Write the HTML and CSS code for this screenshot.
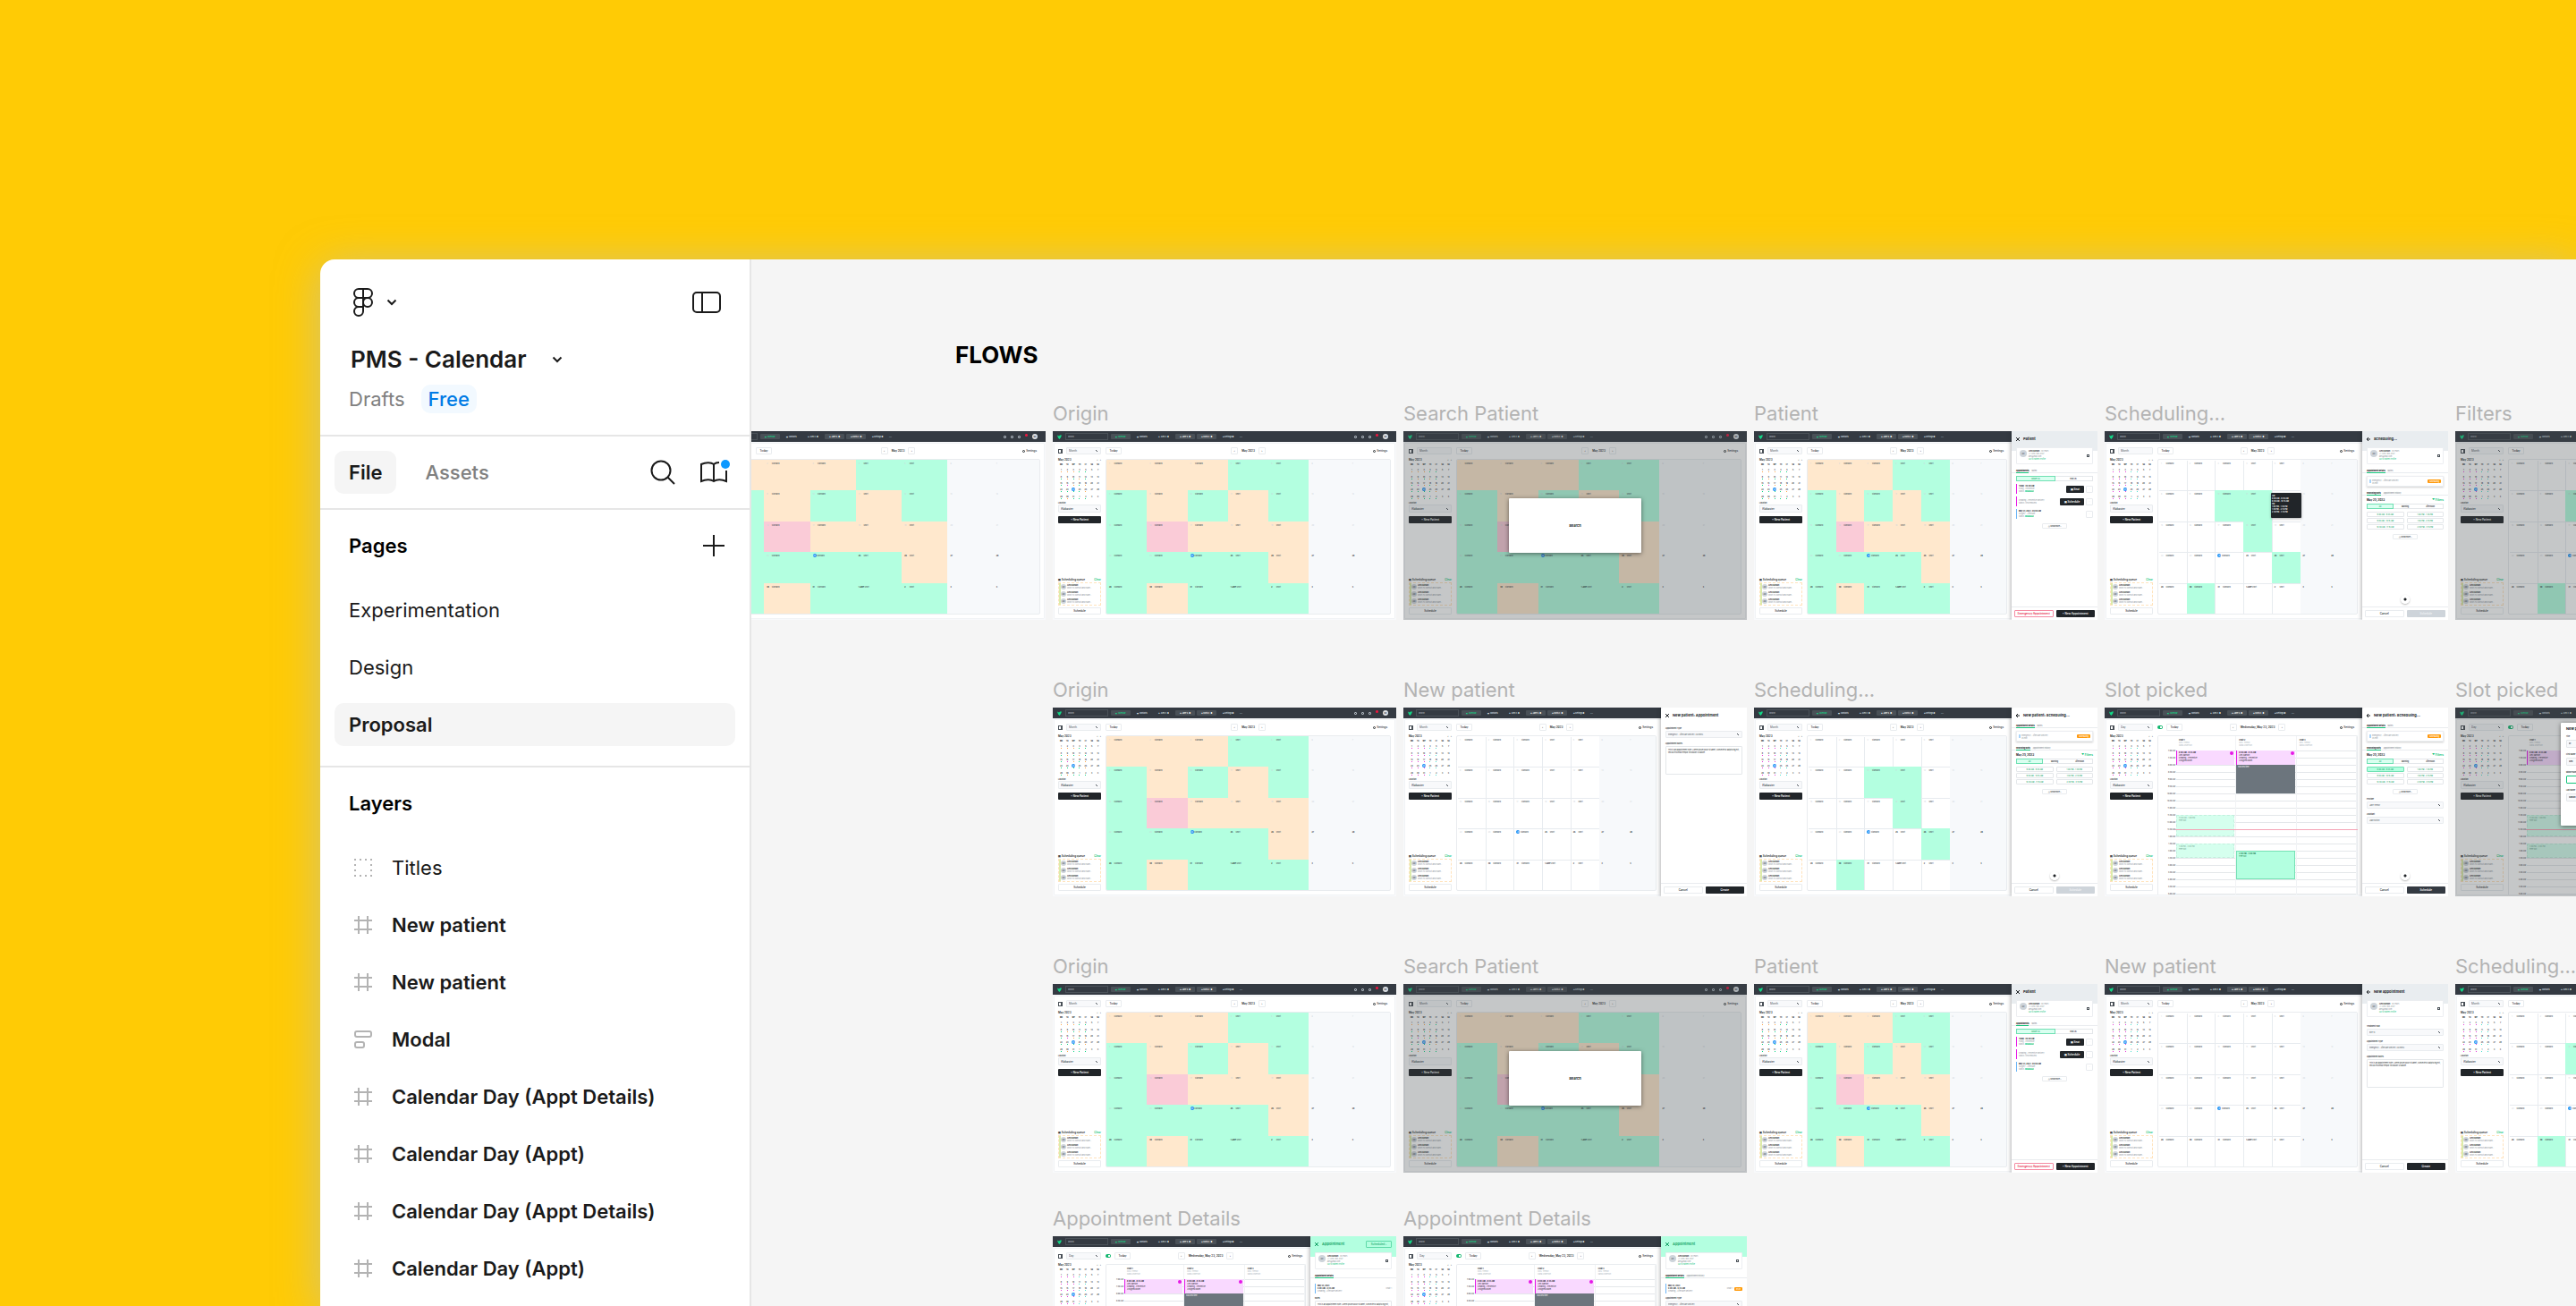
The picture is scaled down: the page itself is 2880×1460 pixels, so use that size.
FILE: index.html
```
<!DOCTYPE html>
<html lang="en">
<head>
<meta charset="utf-8">
<title>PMS - Calendar</title>
<link rel="stylesheet" href="styles.css">
</head>
<body>
<div class="window">
  <aside class="sidebar">
    <header class="file-head">
      <div class="file-head-row">
        <button class="icon-btn menu-btn" aria-label="Main menu">
          <svg width="22" height="32" viewBox="0 0 22 32" class="line"><path d="M6 1h10a5 5 0 0 1 0 10H6A5 5 0 0 1 6 1zM11 1v25M11 11H6a5 5 0 0 0 0 10h5M16 11a5 5 0 1 1 0 10 5 5 0 0 1 0-10zM11 21H6a5 5 0 1 0 5 5z"/></svg>
          <svg width="12" height="8" viewBox="0 0 12 8" class="line"><path d="M1.500 1.500L6 6l4.500-4.500"/></svg>
        </button>
        <button class="icon-btn" aria-label="Toggle panel">
          <svg width="32" height="24" viewBox="0 0 32 24" class="line"><rect x="1" y="1" width="30" height="22" rx="4"/><path d="M11 1v22"/></svg>
        </button>
      </div>
      <button class="file-name">PMS - Calendar
        <svg width="12" height="8" viewBox="0 0 12 8" class="line"><path d="M1.500 1.500L6 6l4.500-4.500"/></svg>
      </button>
      <div class="file-place"><a href="#drafts">Drafts</a><span class="plan">Free</span></div>
    </header>
    <div class="tabs">
      <button class="tab active">File</button>
      <button class="tab">Assets</button>
      <div class="tab-tools">
        <button class="icon-btn" aria-label="Search">
          <svg width="28" height="28" viewBox="0 0 28 28" class="line"><circle cx="12" cy="12" r="10.500"/><path d="M19.500 19.500L27 27"/></svg>
        </button>
        <button class="icon-btn" aria-label="Libraries">
          <svg width="34" height="28" viewBox="0 0 34 28"><path class="line" d="M16 5C13 2.600 7 2.600 2 5v19c5-2.400 11-2.400 14 0 3-2.400 9-2.400 14 0V12M16 5v19M16 5c1.500-1.300 3.500-1.900 6-1.900"/><circle cx="29" cy="5" r="5" fill="#0d99ff"/></svg>
        </button>
      </div>
    </div>
    <section class="group">
      <div class="group-head"><h2>Pages</h2>
        <button class="icon-btn" aria-label="Add page"><svg width="24" height="24" viewBox="0 0 24 24" class="line"><path d="M12 0v24M0 12h24"/></svg></button>
      </div>
      <button class="item">Experimentation</button>
      <button class="item">Design</button>
      <button class="item active">Proposal</button>
    </section>
    <section class="group">
      <div class="group-head"><h2>Layers</h2></div>
      <div id="layers"></div>
    </section>
  </aside>
  <main class="canvas">
    <h1 class="board-title">FLOWS</h1>
    <div id="flows" class="flows"></div>
  </main>
</div>
<script src="app.js"></script>
</body>
</html>
```
FILE: styles.css
```
* { box-sizing: border-box; }
html, body { margin: 0; height: 100%; }
body {
  background: #ffcb05;
  font-family: Inter, "Liberation Sans", sans-serif;
  font-optical-sizing: none;
  overflow: hidden;
  display: flex;
}
button, input, select, textarea { font: inherit; color: inherit; margin: 0; padding: 0; border: 0; background: none; border-radius: 0; }
select { appearance: none; }
textarea { resize: none; display: block; width: 100%; }
h1, h2, h3, p { margin: 0; font: inherit; }
.line { fill: none; stroke: #1a1a1a; stroke-width: 2; }

.window {
  flex: 1;
  min-width: 0;
  margin: 290px 0 0 358px;
  display: flex;
  border-top-left-radius: 16px;
  box-shadow: 0 6px 48px rgba(171, 191, 217, .55);
}
.sidebar {
  flex: none;
  width: 482px;
  background: #fff;
  border-right: 2px solid #e6e6e6;
  border-top-left-radius: 16px;
  font-size: 22px;
  line-height: 32px;
  color: #1a1a1a;
  overflow: hidden;
}
.icon-btn { display: flex; align-items: center; gap: 14px; }
.file-head { height: 198px; padding: 32px 32px 0 32px; border-bottom: 2px solid #e6e6e6; }
.file-head-row { display: flex; justify-content: space-between; padding-left: 5px; }
.menu-btn { gap: 15px; }
.file-name { display: flex; align-items: center; gap: 28px; margin: 32px 0 12px 2px; font-size: 26px; font-weight: 600; }
.file-place { display: flex; gap: 18px; }
.file-place a { color: #808080; text-decoration: none; }
.plan { background: #f2f9ff; color: #007be5; border-radius: 10px; padding: 0 8px; font-weight: 500; }
.tabs { display: flex; align-items: center; gap: 16px; height: 82px; padding: 0 22px 0 16px; border-bottom: 2px solid #e6e6e6; }
.tab { height: 48px; padding: 0 16px; border-radius: 10px; color: #808080; font-weight: 500; }
.tab.active { background: #f5f5f5; color: #1a1a1a; font-weight: 600; }
.tab-tools { margin-left: auto; display: flex; gap: 27px; }
.group { padding: 8px 16px 22px; border-bottom: 2px solid #e6e6e6; }
.group-head { display: flex; align-items: center; justify-content: space-between; height: 64px; padding: 0 12px 0 16px; margin-bottom: 16px; }
.group-head h2 { font-weight: 600; color: #000; }
.item { display: flex; align-items: center; gap: 22px; width: 100%; height: 48px; margin-bottom: 16px; padding: 0 16px; border-radius: 10px; text-align: left; }
.item:last-child { margin-bottom: 0; }
.item.active { background: #f5f5f5; font-weight: 600; }
.item.bold { font-weight: 600; }
.item svg { margin-left: 6px; fill: none; stroke: #b3b3b3; stroke-width: 2; }

.canvas { flex: 1; min-width: 0; background: #f5f5f5; overflow: hidden; }
.board-title { margin: 91px 0 0 228px; font-size: 26px; line-height: 32px; font-weight: 700; color: #000; }
.flows { margin-left: -55px; }
.flow { display: grid; grid-template-columns: repeat(6, 384px); gap: 8px; margin-top: 62px; }
.flow:first-child { margin-top: 33px; }
.flow.tight { margin-top: 35px; }
.label { height: 36px; line-height: 33px; font-size: 22px; color: #b3b3b3; white-space: nowrap; }
.from-2 > :first-child { grid-column: 2; }

/* Calendar screens */
.screen { position: relative; display: flex; height: 211px; background: #f8f9fb; font-size: 3px; line-height: 4px; color: #212529; overflow: hidden; }
.app { flex: 1; min-width: 0; display: flex; flex-direction: column; overflow: hidden; }
.topbar { flex: none; height: 12px; background: #343a42; color: #dee2e6; display: flex; align-items: center; padding: 0 4px 0 5px; font-weight: 600; white-space: nowrap; }
.logo { width: 5px; height: 5px; flex: none; margin-right: 4px; }
.search { flex: none; width: 48px; height: 8px; border: 1px solid #4b5259; padding: 0 2px; margin-right: 3px; font-size: 2px; }
.search::placeholder { color: #adb5bd; opacity: 1; }
.chip { flex: none; width: 22px; height: 6px; margin-right: 2px; border-radius: 1px; font-size: 2px; text-align: center; line-height: 6px; }
.chip.on { background: #495057; color: #fff; }
.chip.green { color: #12d887; }
.status { margin-left: auto; display: flex; align-items: center; gap: 5px; }
.status i { width: 3px; height: 3px; border: 1px solid #adb5bd; border-radius: 1px; }
.status .alert { background: #e5173f; border-color: #e5173f; margin-bottom: 4px; }
.status b { width: 6px; height: 6px; margin-right: 5px; border-radius: 50%; background: #dee2e6; color: #343a42; font-size: 2px; line-height: 6px; text-align: center; }
.card { flex: 1; min-height: 0; display: flex; gap: 5px; margin: 2px; padding: 4px; background: #fff; box-shadow: 0 0 1px #ced4da; }
.with-panel .card { margin-right: 0; padding-right: 5px; }
.side { flex: none; width: 48px; display: flex; flex-direction: column; }
.side-head { display: flex; justify-content: space-between; align-items: center; height: 8px; }
.toggle { width: 5px; height: 5px; border: 1px solid #495057; border-right-width: 2px; }
.pick { border: 1px solid #e9ecef; border-radius: 1px; background: #f8f9fb; color: #495057; padding: 0 2px; height: 9px; width: 100%; font-size: 3px; background-image: linear-gradient(45deg, transparent 50%, #495057 50%, #495057 60%, transparent 60%); background-size: 2px 2px; background-repeat: no-repeat; background-position: right 3px center; }
.side-head .pick { width: 39px; height: 8px; }
.month { display: flex; justify-content: space-between; margin-top: 4px; font-weight: 600; }
.month span { color: #495057; }
.mini { border-collapse: collapse; width: 100%; height: 43px; font-size: 2px; table-layout: fixed; font-weight: 600; }
.mini td, .mini th { padding: 0; text-align: center; }
.mini td::after { content: ""; display: block; width: 1px; height: 1px; margin: 0 auto; background: var(--dot, transparent); }
.mini .p { --dot: #e83ed8; }
.mini .c { --dot: #4fe3d0; }
.mini .o { --dot: #ffa94d; }
.mini .g { --dot: #12d887; }
.mini mark { display: block; width: 4px; height: 4px; margin: 0 auto; border-radius: 50%; background: #1c8cf5; color: #fff; }
.field-label { display: block; font-size: 2px; font-weight: 600; margin-top: 1px; }
.dark { background: #212529; color: #fff; border-radius: 1px; font-weight: 600; text-align: center; height: 8px; width: 100%; }
.side .dark { margin-top: 4px; }
.queue-head { display: flex; justify-content: space-between; margin-top: auto; font-size: 3px; font-weight: 600; height: 5px; }
.queue-head a { color: #12c47a; text-decoration: none; }
.queue { border: 1px dashed #ffe3bd; height: 26px; margin-bottom: 2px; }
.queue div { display: flex; align-items: center; gap: 1px; height: 8px; border-left: 2px solid #dcebaa; font-size: 2px; line-height: 3px; white-space: nowrap; color: #868e96; }
.queue b { display: block; color: #212529; }
.who { flex: none; width: 6px; height: 6px; border-radius: 50%; background: #ced4da; color: #495057; font-size: 2px; line-height: 6px; text-align: center; font-weight: 600; }
.light { border: 1px solid #e9ecef; border-radius: 1px; background: #fff; height: 8px; font-weight: 500; text-align: center; }
.main { flex: 1; min-width: 0; display: flex; flex-direction: column; gap: 5px; }
.toolbar { display: grid; grid-template-columns: 1fr auto 1fr; height: 8px; align-items: center; font-weight: 600; white-space: nowrap; }
.toolbar > div { display: flex; align-items: center; gap: 4px; }
.toolbar .end { justify-content: flex-end; padding-right: 4px; gap: 1px; font-weight: 500; }
.bare .main { margin-left: 11px; }
.bare .toolbar { padding-left: 43px; }
.gear { width: 3px; height: 3px; border: 1px solid #212529; border-radius: 50%; }
.today { width: 18px; }
.arrow { width: 8px; }
.switch { appearance: none; width: 6px; height: 4px; border-radius: 2px; background: radial-gradient(circle at 4px 2px, #fff 1px, #12b76f 1px); }
.cal { flex: 1; display: grid; grid-template-columns: repeat(7, 1fr); grid-template-rows: repeat(5, 1fr); border: 1px solid #e9ecef; border-radius: 2px; overflow: hidden; font-size: 2px; font-weight: 500; }
.cal > div { box-shadow: 1px 1px 0 rgba(160, 175, 190, .25); padding: 2px 3px; white-space: nowrap; color: #495057; }
.cal .weekend { background: #f7f9fb; }
.cal .orange { background: #ffe8cd; }
.cal .mint { background: #b3ffe0; }
.cal .pink { background: #facbd7; }
.cal i { font-style: normal; display: inline-block; width: 5px; color: #ced4da; }
.cal .next i { color: #212529; font-weight: 700; width: auto; min-width: 5px; }
.cal .now i { width: 4px; height: 4px; border-radius: 50%; background: #1c8cf5; color: #fff; text-align: center; }

.day { flex: 1; min-height: 0; display: grid; grid-template-columns: 20px 1fr 1fr 1fr; grid-template-rows: 16px 1fr; border: 1px solid #e9ecef; border-bottom: 0; border-radius: 2px 2px 0 0; overflow: hidden; font-size: 2px; line-height: 3px; margin-bottom: -4px; }
.day h3 { padding: 3px; color: #adb5bd; border-right: 1px solid #f1f3f5; }
.day h3 b { display: block; color: #212529; }
.hours { text-align: right; padding-right: 1px; line-height: 8px; margin-top: -4px; white-space: nowrap; }
.hours div { height: 8px; }
.chair { position: relative; border-right: 1px solid #f1f3f5; background: repeating-linear-gradient(#e4e7ea 0 1px, #fff 1px 8px); }
.event { position: absolute; left: 0; right: 1px; padding: 1px 2px; white-space: nowrap; }
.event.visit { top: 0; height: 16px; background: #f9d9ff; border-left: 1px solid #e619e6; }
.event.visit::after { content: ""; position: absolute; right: 1px; top: 1px; width: 4px; height: 4px; border-radius: 50%; background: #e619e6; }
.event.block { top: 16px; height: 32px; background: #6c757d; color: #fff; }
.event.soft { background: #d5ffee; border: 1px dashed #c2efdd; color: #6c9a86; }
.event.free { top: 112px; height: 32px; background: #b3ffe0; border: 1px solid #74e0b4; color: #17794f; }
.event.first { top: 72px; height: 24px; }
.event.second { top: 104px; height: 16px; }
.now-line { position: absolute; left: 79px; width: 204px; top: 136px; height: 1px; background: #f5a3b5; }

.panel { flex: none; width: 96px; background: #fff; display: flex; flex-direction: column; box-shadow: -1px 0 4px rgba(33, 37, 41, .35); position: relative; border-top-left-radius: 2px; font-size: 2px; }
.panel > * { margin-left: 5px; margin-right: 5px; }
.panel-head { display: flex; align-items: center; gap: 4px; height: 18px; margin: 0; padding: 0 5px; font-size: 4px; font-weight: 700; white-space: nowrap; }
.panel-head svg { width: 4px; height: 4px; fill: none; stroke: currentColor; }
.panel.gray { background: linear-gradient(#e9edf0 22px, #fff 22px); }
.panel.mint { background: linear-gradient(#b3ffe0 23px, #fff 23px); }
.panel.mint .panel-head { color: #0f9f62; font-weight: 600; }
.panel-head .light { margin-left: auto; width: 29px; font-size: 3px; background: none; border-color: #5fd9a8; }
.person { flex: none; display: flex; gap: 2px; height: 19px; padding: 2px 3px; background: #fff; border: 1px solid #eceef1; border-radius: 1px; line-height: 3px; color: #868e96; margin-bottom: 5px; }
.person .who { width: 8px; height: 8px; line-height: 8px; }
.person b { color: #212529; }
.person a { color: #12c47a; text-decoration: none; }
.person em { margin: 5px 0 0 auto; width: 3px; height: 3px; border: 1px solid #495057; }
.sub { display: flex; gap: 3px; height: 5px; margin-left: 0; margin-right: 0; padding: 0 5px; border-bottom: 1px solid #e9ecef; font-weight: 600; margin-bottom: 3px; flex: none; color: #868e96; }
.sub b { border-bottom: 1px solid #12c47a; height: 5px; color: #212529; }
.seg { display: flex; height: 6px; border: 1px solid #e4e7ea; line-height: 4px; text-align: center; font-weight: 600; flex: none; }
.seg button { flex: 1; line-height: 4px; }
.seg .on { background: #d9fff0; color: #12a466; outline: 1px solid #6fe0b3; }
.appt { display: flex; align-items: center; gap: 2px; height: 11px; margin-top: 3px; border-left: 1px solid #e619e6; padding-left: 2px; color: #868e96; line-height: 3px; white-space: nowrap; flex: none; }
.appt.blue { border-color: #6bb5f7; }
.appt p { flex: 1; }
.appt b { color: #212529; }
.appt mark { background: #20c77f; color: #fff; border-radius: 1px; }
.appt .dark { width: 20px; font-size: 3px; line-height: 8px; }
.appt .wide { width: 27px; }
.appt .light { width: 8px; }
.more { align-self: center; width: 28px; height: 6px; margin-top: 5px; font-size: 2px; line-height: 4px; flex: none; }
.job { display: flex; justify-content: space-between; height: 12px; padding: 3px 2px; border: 1px solid #eceef1; box-shadow: 0 1px 2px rgba(0, 0, 0, .2); line-height: 3px; color: #868e96; margin-bottom: 5px; flex: none; }
.job p { border-left: 2px solid #a9d4fb; padding-left: 1px; }
.tag { background: #ff9a0a; color: #fff; border-radius: 1px; height: 4px; line-height: 4px; padding: 0 2px; font-weight: 600; }
.date { display: flex; justify-content: space-between; font-size: 3px; font-weight: 700; height: 6px; flex: none; }
.date a { color: #12c47a; text-decoration: none; }
.slots { display: grid; grid-template-columns: 1fr 1fr; gap: 1px 3px; margin-top: 3px; flex: none; }
.slots button { height: 6px; border: 1px solid #e4e7ea; border-radius: 1px; color: #12a466; line-height: 4px; font-weight: 500; }
.slots .on { background: #b3ffe0; border-color: #6fe0b3; }
.form { display: flex; flex-direction: column; gap: 1px; flex: none; }
.form label { font-weight: 600; margin-top: 3px; line-height: 4px; }
.form .pick, .form input { font-size: 2px; height: 8px; flex: none; }
.form input { border: 1px solid #e4e7ea; background: #f8f9fb; border-radius: 1px; padding: 0 2px; }
.form .focus { border-color: #12c47a; background: #fff; }
.form textarea { height: 32px; border: 1px solid #e4e7ea; border-radius: 1px; padding: 2px; line-height: 3px; font-size: 2px; overflow: hidden; }
.fab { width: 10px; height: 10px; border-radius: 50%; background: radial-gradient(#212529 1px, #fff 2px); box-shadow: 0 1px 2px rgba(0, 0, 0, .3); margin: auto auto 3px; }
.panel footer { display: grid; grid-template-columns: 1fr 1fr; gap: 3px; align-items: center; height: 15px; margin: auto 0 0; padding: 0 3px; border-top: 1px solid #e9ecef; font-size: 3px; white-space: nowrap; flex: none; }
.panel .fab + footer { margin-top: 0; }
.panel .danger { border: 1px solid #f58ba3; color: #e5173f; font-weight: 600; }
.off { background: #ced4da; color: #f1f3f5; }
.slate { background: #343a42; }
.dim { position: absolute; inset: 0; background: rgba(64, 68, 72, .3); display: flex; justify-content: center; align-items: center; }
.modal { width: 148px; height: 61px; background: #fff; border-radius: 1px; box-shadow: 0 1px 5px rgba(0, 0, 0, .5); display: flex; align-items: center; justify-content: center; font-size: 4px; font-weight: 700; }
.modal.tall { height: 115px; margin-top: -63px; display: block; padding: 5px 6px; }
.modal.tall .form { font-size: 2px; }
.modal.tall .form label { display: block; margin: 4px 0 2px; }
.modal.tall .form input { display: block; width: 100%; height: 9px; }
.tip { position: absolute; left: 186px; top: 69px; width: 34px; height: 28px; padding: 2px 1px; background: #212529; color: #fff; border-radius: 1px; font-size: 2px; font-weight: 600; line-height: 3px; box-shadow: 0 1px 3px rgba(0, 0, 0, .3); }
```
FILE: app.js
```
const repeat = (n, fn) => Array.from({ length: n }, (_, i) => fn(i)).join('');

// Layers list
const frameIcon = '<svg width="20" height="20" viewBox="0 0 20 20"><path d="M5 0v20M15 0v20M0 5h20M0 15h20"/></svg>';
const groupIcon = '<svg width="20" height="20" viewBox="0 0 20 20"><path d="M0 1h2M1 0v2M6 1h2M12 1h2M18 1h2M19 0v2M19 6v2M19 12v2M19 18v2M20 19h-2M14 19h-2M8 19H6M2 19H0M1 20v-2M1 14v-2M1 8V6"/></svg>';
const stackIcon = '<svg width="20" height="20" viewBox="0 0 20 20"><rect x="1" y="1" width="18" height="6" rx="2"/><rect x="1" y="13" width="10" height="6" rx="2"/></svg>';
const layers = ['Titles', 'New patient', 'New patient', 'Modal', 'Calendar Day (Appt Details)', 'Calendar Day (Appt)', 'Calendar Day (Appt Details)', 'Calendar Day (Appt)'];
document.getElementById('layers').innerHTML = layers.map(name => {
  const icon = name === 'Titles' ? groupIcon : name === 'Modal' ? stackIcon : frameIcon;
  return `<button class="item ${name === 'Titles' ? '' : 'bold'}">${icon}${name}</button>`;
}).join('');

// Month grid fills, one letter per weekday: o orange, g green, p pink, - empty
const fills = { heat: 'ooogg gogog gpooo ggggo goggg', free: '----- --gg- ---g- ----g -g---', none: '----- ----- ----- ----- -----' };
const names = { o: 'orange', g: 'mint', p: 'pink', '-': '' };

function month(kind) {
  const rows = fills[kind].split(' ');
  return '<div class="cal">' + repeat(35, i => {
    const col = i % 7, row = Math.floor(i / 7), n = i + 1;
    const day = n > 31 ? n - 31 : n;
    const cls = [col > 4 ? 'weekend' : names[rows[row][col]], n === 24 ? 'now' : n > 24 ? 'next' : ''].join(' ');
    const text = col > 4 ? '' : col > 2 ? 'Short' : 'Standard';
    return `<div class="${cls}"><i>${day}${n === 32 ? ' June' : ''}</i> ${text}</div>`;
  }) + '</div>';
}

const visit = '<div class="event visit"><b>8:00 AM - 8:45 AM</b><br>Alex Danson<br>Cleaning - Preventive<br>Assigned Room</div>';

function day(picked) {
  const heads = repeat(3, i => `<h3><b>Chair ${i + 1}</b>DDS: Tremor<br>Dana Anderson</h3>`);
  const hours = repeat(21, i => `<div>${Math.floor(i / 2 + 6) % 12 + 1}:${i % 2 ? '30' : '00'} AM</div>`);
  return `<div class="day"><span></span>${heads}<div class="hours">${hours}</div>
    <div class="chair">${visit}<div class="event soft first">11:30 AM - 1:00 PM<br>Free slot</div><div class="event soft second">1:30 PM - 2:30 PM<br>Free slot</div></div>
    <div class="chair">${visit}<div class="event block">Blocked time</div>${picked ? '<div class="event free"><b>2:00 PM - 4:00 PM</b><br>Free slot</div>' : ''}</div>
    <div class="chair"></div></div>`;
}

const dotRows = { heat: 'ooogg gogog gpogo ggggo goggg', other: 'pppcc pppcc pppcc pppcc pppcc' };

function side(view, kind) {
  const dots = dotRows[kind === 'heat' ? 'heat' : 'other'].split(' ');
  const weeks = repeat(5, r => '<tr>' + repeat(7, c => {
    const n = r * 7 + c + 1, d = n > 31 ? n - 31 : n;
    return `<td class="${c < 5 ? dots[r][c] : ''}">${n === 24 ? '<mark>24</mark>' : d}</td>`;
  }) + '</tr>');
  return `<div class="side">
    <div class="side-head"><span class="toggle"></span><select class="pick" aria-label="View"><option>${view}</option></select></div>
    <div class="month">May 2023<span>‹ &nbsp; ›</span></div>
    <table class="mini"><tr>${['Mo', 'Tu', 'We', 'Th', 'Fr', 'Sa', 'Su'].map(d => `<th>${d}</th>`).join('')}</tr>${weeks}</table>
    <label class="field-label">Location<select class="pick"><option>Alabaster</option></select></label>
    <button class="dark">+ New Patient</button>
    <div class="queue-head"><span>▤ Scheduling queue</span><a href="#clear">Clear</a></div>
    <div class="queue">${repeat(3, () => '<div><span class="who">AD</span><p><b>Alex Danson</b>Short-Tx Consult and Exam...</p></div>')}</div>
    <button class="light">Schedule</button>
  </div>`;
}

function app(o) {
  const isDay = o.view === 'Day';
  const status = o.panel ? '' : '<div class="status"><i></i><i></i><i></i><i class="alert"></i><b>SC</b></div>';
  return `<div class="app ${o.bare ? 'bare' : ''}">
    <div class="topbar">
      <svg class="logo" viewBox="0 0 10 10"><path fill="#12d887" d="M0 1l4 2 2-2 4 0-2 5-3 4-3-3z"/></svg>
      <input class="search" placeholder="${o.bare ? '' : 'Search...'}" aria-label="Search">
      <span class="chip on green">▣ Calendar</span><span class="chip">▤ Contacts</span><span class="chip">♟ Alex C. ●</span><span class="chip on">♟ Jane S. ●</span><span class="chip on">♟ Doris C. ●</span><span class="chip">✱ Settings ●</span><span>...</span>
      ${status}
    </div>
    <div class="card">${o.bare ? '' : side(isDay ? 'Day' : 'Month', o.fill)}
      <div class="main">
        <div class="toolbar">
          <div>${isDay ? '<input type="checkbox" class="switch" checked aria-label="Chairs">' : ''}<button class="light today">Today</button></div>
          <div><button class="light arrow">‹</button>${isDay ? 'Wednesday, May 23, 2023' : 'May 2023'}<button class="light arrow">›</button></div>
          <div class="end"><span class="gear"></span>Settings</div>
        </div>
        ${isDay ? day(o.picked) : month(o.fill)}
      </div>
    </div>
  </div>`;
}

const cross = '<svg viewBox="0 0 4 4"><path d="M0 0l4 4M4 0L0 4"/></svg>';
const back = '<svg viewBox="0 0 4 4"><path d="M4 2H0M2 0L0 2l2 2"/></svg>';
const person = '<div class="person"><span class="who">AC</span><p><b>Alex Danson</b> · 30 years<br>+1 (470) 555-0147<br>alex@mail.com<br><a href="#profile">Go to Patient Profile</a></p><em></em></div>';
const job = '<div class="job"><p>Emergency - Aftercare Delivery<br>45 min</p><span class="tag">Scheduling</span></div>';
const head = (icon, title, extra = '') => `<div class="panel-head">${icon}${title}${extra}</div>`;
const note = 'This is an appointment note. Lorem ipsum dolor sit amet, consectetur adipiscing elit, sed do eiusmod tempor incididunt ut labore.';
const foot = (label, cls) => `<footer><button class="light">Cancel</button><button class="dark ${cls}">${label}</button></footer>`;
const select = (label, value) => `<label>${label}</label><select class="pick" aria-label="${label}"><option>${value}</option></select>`;

const slots = picked => `<div class="sub"><b>Searching slots</b><span>Appointment history</span></div>
  <div class="date">May 25, 2023<a href="#filters">▼ Filters</a></div>
  <div class="seg"><button class="on">All</button><button>Morning</button><button>Afternoon</button></div>
  <div class="slots">${['9:00 AM - 9:45 AM', '1:00 PM - 1:45 PM', '9:30 AM - 10:15 AM', '1:30 PM - 2:15 PM', '10:30 AM - 11:15 AM', '2:30 PM - 3:15 PM'].map((s, i) => `<button class="${picked && !i ? 'on' : ''}">${s}</button>`).join('')}</div>
  <button class="light more">◷ Show more ›</button>`;

const panels = {
  patient: () => `<div class="panel gray">${head(cross, 'Patient')}${person}
    <div class="sub"><b>Appointments</b><span>Notes</span></div>
    <div class="seg"><button class="on">Future (4)</button><button>Past (8)</button></div>
    <div class="appt"><p><b>Today · 09:00 AM</b><br>Filling - Preventive<br>Status: <mark>Confirmed</mark></p><button class="dark">▣ Seat</button><button class="light">···</button></div>
    <div class="appt"><p>Cleaning - Preventive Delivery<br>Status: Unscheduled</p><button class="dark wide">▣ Schedule</button><button class="light">···</button></div>
    <div class="appt blue"><p><b>May 24, 2023 · 09:00 AM</b><br>Surgery - Aftercare<br>Status: <mark>Confirmed</mark></p><button class="light">···</button></div>
    <button class="light more">◷ Show more ›</button>
    <footer><button class="light danger">Emergency Appointment</button><button class="dark">+ New Appointment</button></footer></div>`,
  scheduling: () => `<div class="panel gray">${head(back, 'Scheduling...')}${person}<div class="sub"><b>Appointment details</b><span>Notes</span></div>${job}${slots()}<div class="fab"></div>${foot('Schedule', 'off')}</div>`,
  newScheduling: picked => `<div class="panel">${head(back, 'New patient: Scheduling...')}<div class="sub"><b>Appointment details</b><span>Notes</span></div>${job}${slots(picked)}${picked ? `<div class="form">${select('Provider', 'Jane Tremor')}${select('Assistant', 'Joan Button')}</div>` : ''}<div class="fab"></div>${foot('Schedule', picked ? 'slate' : 'off')}</div>`,
  newPatient: () => `<div class="panel">${head(cross, 'New patient: Appointment')}<div class="form">${select('Appointment Type', 'Emergency - Aftercare Delivery (30 mins)')}<label>Appointment Notes</label><textarea aria-label="Notes">${note}</textarea></div>${foot('Create', '')}</div>`,
  newAppointment: () => `<div class="panel gray">${head(back, 'New appointment')}${person}<div class="form">${select('Treatment Plan', 'Bite Tx')}${select('Appointment Type', 'Emergency - Aftercare Delivery (30 mins)')}<label>Appointment Notes</label><textarea aria-label="Notes">${note}</textarea></div>${foot('Create', '')}</div>`,
  details: tagged => `<div class="panel mint">${head(cross, 'Appointment', tagged ? '' : '<button class="light">Scheduled ›</button>')}${person}
    <div class="sub"><b>Appointment details</b>${tagged ? '<span>Appointment history</span>' : ''}</div>
    <div class="appt blue"><p><b>May 25, 2023<br>9:00 AM - 9:45 AM</b><br>Cleaning - Aftercare Delivery</p>Chair 1 ${tagged ? '<span class="tag">In 2h</span>' : ''}</div>
    <div class="form">${tagged ? select('Appointment Type', 'Emergency - Aftercare Delivery') : `<label>Notes</label><textarea aria-label="Notes">${note}</textarea>`}</div></div>`
};

const overlays = {
  search: '<div class="dim"><div class="modal">Search</div></div>',
  plain: '<div class="dim"></div>',
  create: `<div class="dim"><div class="modal tall">New patient<div class="form">${[['Title', 'Dr.'], ['First Name', 'Alex'], ['Middle Name', ''], ['Last Name', 'Danson']].map(([l, v]) => `<div><label>${l}</label><input class="${v ? '' : 'focus'}" value="${v}" aria-label="${l}"></div>`).join('')}</div></div></div>`,
  tip: '<div class="tip">AM<br>9:00 AM - 9:45 AM<br>9:30 AM - 10:15 AM<br>PM<br>1:00 PM - 1:45 PM<br>1:30 PM - 2:15 PM<br>2:30 PM - 3:15 PM</div>'
};

const screen = (label, o = {}) => `<article><h2 class="label">${label}</h2>
  <div class="screen ${o.panel ? 'with-panel' : ''}">${app({ fill: 'heat', ...o })}${o.panel || ''}${o.picked !== undefined ? '<div class="now-line"></div>' : ''}${overlays[o.over] || ''}</div></article>`;

const origin = screen('Origin');
const search = screen('Search Patient', { over: 'search' });
const patient = screen('Patient', { panel: panels.patient() });

const flows = [
  ['', screen('', { bare: true }), origin, search, patient,
    screen('Scheduling...', { fill: 'free', panel: panels.scheduling(), over: 'tip' }),
    screen('Filters', { fill: 'free', panel: panels.scheduling(), over: 'plain' })],
  ['from-2', origin,
    screen('New patient', { fill: 'none', panel: panels.newPatient() }),
    screen('Scheduling...', { fill: 'free', panel: panels.newScheduling() }),
    screen('Slot picked', { view: 'Day', picked: true, fill: 'none', panel: panels.newScheduling(true) }),
    screen('Slot picked', { view: 'Day', picked: false, fill: 'none', panel: panels.newScheduling(true), over: 'create' })],
  ['from-2', origin, search, patient,
    screen('New patient', { fill: 'none', panel: panels.newAppointment() }),
    screen('Scheduling...', { fill: 'free', panel: panels.scheduling() })],
  ['from-2 tight',
    screen('Appointment Details', { view: 'Day', picked: true, fill: 'none', panel: panels.details() }),
    screen('Appointment Details', { view: 'Day', picked: true, fill: 'none', panel: panels.details(true) })]
];

document.getElementById('flows').innerHTML = flows.map(([cls, ...items]) => `<section class="flow ${cls}">${items.join('')}</section>`).join('');
```
